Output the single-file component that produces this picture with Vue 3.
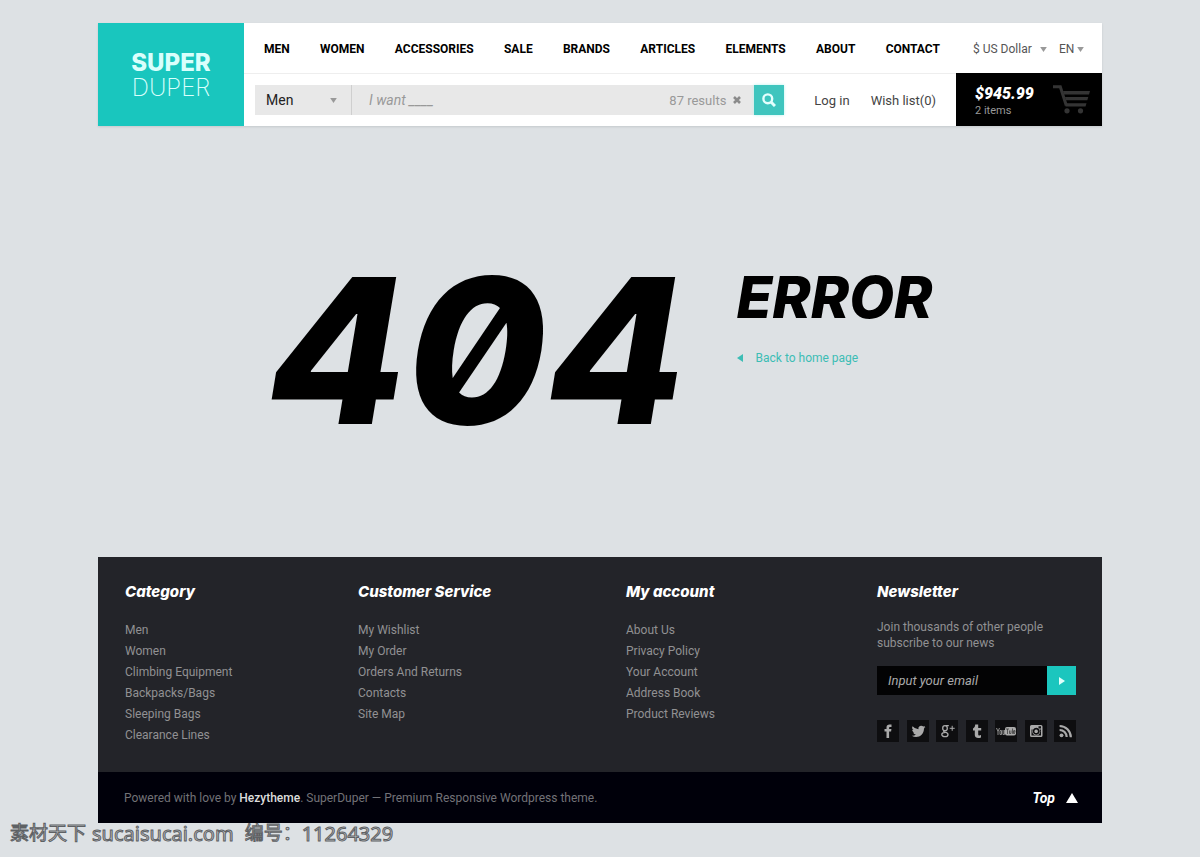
<script setup>
import { ref } from 'vue'

const nav = ['MEN', 'WOMEN', 'ACCESSORIES', 'SALE', 'BRANDS', 'ARTICLES', 'ELEMENTS', 'ABOUT', 'CONTACT']
const columns = [
  { title: 'Category', links: ['Men', 'Women', 'Climbing Equipment', 'Backpacks/Bags', 'Sleeping Bags', 'Clearance Lines'] },
  { title: 'Customer Service', links: ['My Wishlist', 'My Order', 'Orders And Returns', 'Contacts', 'Site Map'] },
  { title: 'My account', links: ['About Us', 'Privacy Policy', 'Your Account', 'Address Book', 'Product Reviews'] },
]
const query = ref('')
const email = ref('')
</script>

<template>
  <div class="page">
    <header class="header">
      <a href="#" class="logo"><strong>SUPER</strong><span>DUPER</span></a>
      <div class="header-main">
        <div class="row-top">
          <nav class="nav">
            <a v-for="item in nav" :key="item" href="#">{{ item }}</a>
          </nav>
          <div class="locale">
            <div class="pick pick-currency">
              <select aria-label="Currency"><option>$ US Dollar</option></select>
              <svg class="caret" viewBox="0 0 8 6"><path d="M0 0h8L4 6z" /></svg>
            </div>
            <div class="pick pick-lang">
              <select aria-label="Language"><option>EN</option></select>
              <svg class="caret" viewBox="0 0 8 6"><path d="M0 0h8L4 6z" /></svg>
            </div>
          </div>
        </div>
        <div class="row-bottom">
          <form class="search" @submit.prevent>
            <div class="pick pick-dept">
              <select aria-label="Department"><option>Men</option></select>
              <svg class="caret" viewBox="0 0 8 6"><path d="M0 0h8L4 6z" /></svg>
            </div>
            <input v-model="query" type="text" class="query" aria-label="Search" placeholder="I want ____" />
            <span class="results">87 results</span>
            <button type="button" class="clear" aria-label="Clear search" @click="query = ''">
              <svg viewBox="0 0 8 8"><path d="M1 1l6 6M7 1L1 7" stroke="#8b8b8b" stroke-width="2.6" /></svg>
            </button>
            <button type="submit" class="go" aria-label="Search">
              <svg viewBox="0 0 14 14" fill="none" stroke="#e4fffd"><circle cx="5.8" cy="5.8" r="4.4" stroke-width="2.4" /><path d="M9 9l4 4" stroke-width="3" /></svg>
            </button>
          </form>
          <div class="account"><a href="#">Log in</a><a href="#">Wish list(0)</a></div>
          <a href="#" class="cart">
            <span class="cart-text"><strong>$945.99</strong><span>2 items</span></span>
            <svg viewBox="0 0 37 29" fill="#343434">
              <path d="M0 1.800h7.300L13.300 20.500" fill="none" stroke="#343434" stroke-width="3" />
              <path d="M10 6h27l-1 3.500H11zM12 12h23.300l-1 3.200H13zM13 18.300h20.500l-1 3.200H12.500z" />
              <circle cx="14" cy="25.800" r="2.600" /><circle cx="27.500" cy="25.800" r="2.600" />
            </svg>
          </a>
        </div>
      </div>
    </header>

    <main class="main">
      <h1 class="code">404</h1>
      <div class="message">
        <h2>ERROR</h2>
        <a href="#" class="back"><svg viewBox="0 0 6 8"><path d="M6 0v8L0 4z" fill="#3cbdb5" /></svg>Back to home page</a>
      </div>
    </main>

    <footer class="footer">
      <div class="footer-cols">
        <section v-for="col in columns" :key="col.title">
          <h3>{{ col.title }}</h3>
          <ul><li v-for="link in col.links" :key="link"><a href="#">{{ link }}</a></li></ul>
        </section>
        <section>
          <h3>Newsletter</h3>
          <p class="pitch">Join thousands of other people subscribe to our news</p>
          <form class="subscribe" @submit.prevent>
            <input v-model="email" type="email" aria-label="Email" placeholder="Input your email" />
            <button type="submit" aria-label="Subscribe"><svg viewBox="0 0 6 8"><path d="M0 0l6 4-6 4z" fill="#dffffb" /></svg></button>
          </form>
          <div class="social">
            <a href="#" aria-label="Facebook"><svg viewBox="0 0 22 22"><path d="M9.500 18v-6.500H7.500V9h2V7.500C9.500 5.300 10.700 4.500 12.500 4.500h2V7h-1.300c-.8 0-1.100.3-1.100 1v1h2.300l-.3 2.500h-2V18z" /></svg></a>
            <a href="#" aria-label="Twitter"><svg viewBox="0 0 22 22"><path d="M18.500 7c-.5.300-1 .4-1.600.5.600-.4 1-.9 1.200-1.500-.6.300-1.200.5-1.800.6a2.900 2.900 0 0 0-4.900 2.600A8 8 0 0 1 5.600 6.200a2.900 2.900 0 0 0 .9 3.800c-.5 0-.9-.1-1.300-.3 0 1.400 1 2.500 2.300 2.800-.4.100-.9.100-1.300 0 .4 1.200 1.400 2 2.700 2-1.200 1-2.700 1.400-4.200 1.200 5.500 3.400 12.300-.2 12.300-7.200.6-.4 1.100-.9 1.500-1.500z" /></svg></a>
            <a href="#" aria-label="Google Plus"><svg class="line" viewBox="0 0 22 22"><ellipse cx="9" cy="8.200" rx="2.300" ry="2.500" /><path d="M9.500 5.600h3.300M8 10.700c-1.800 1.500 4 1 4 3.700 0 3-6.200 3-6.200.2 0-1.600 2-2.200 3.600-2.200" /><path d="M16.200 5.800v5M13.700 8.300h5" stroke-width="1" /></svg></a>
            <a href="#" aria-label="Tumblr"><svg viewBox="0 0 22 22"><path d="M9.200 4.500h3V8h3v2.500h-3v3.700c0 1.500 1.400 1.400 2.800.7v2.500c-2.800 1.200-6.200.8-6.200-2.400v-4.500H7V8.400c1.500-.5 2-1.900 2.200-3.900z" /></svg></a>
            <a href="#" aria-label="YouTube"><svg viewBox="0 0 22 22"><rect x="10" y="7" width="11" height="8.500" rx="2" /><path d="M1.500 8l1.500 3.500V15M4.500 8L3 11.500M5 10.500h1.500v4H5zM8 10v4.500h1.500V10" fill="none" stroke="#8c8c8c" /><path d="M11 9h3M12.500 9v5M14.500 10.500v3H16v-3M17.500 8.500v5h1v-3M20 12.500v-2h-.8v3h.8" fill="none" stroke="#333" stroke-width=".7" /></svg></a>
            <a href="#" aria-label="Instagram"><svg viewBox="0 0 22 22"><path fill-rule="evenodd" d="M6.500 5h9.500Q17.500 5 17.500 6.500v9q0 1.500-1.500 1.500h-9.500Q5 17 5 15.500v-9Q5 5 6.500 5zM6.500 9.500v6h9.500v-6h-1.200a4 4 0 1 1-7.100 0zM13.500 6.300v2.200h2.500V6.300z" /><path fill-rule="evenodd" d="M11.200 7.700a3.500 3.500 0 1 0 .1 0zM11.200 9.500a1.800 1.800 0 1 1-.1 0z" fill="#0e0e10" /></svg></a>
            <a href="#" aria-label="RSS"><svg viewBox="0 0 22 22"><circle cx="7.500" cy="15.300" r="1.900" /><path d="M5.600 10a7.100 7.100 0 0 1 7.100 7.100M5.600 6a11.200 11.200 0 0 1 11.200 11.200" fill="none" stroke="#aaa" stroke-width="2.200" /></svg></a>
          </div>
        </section>
      </div>
      <div class="footer-bottom">
        <p>Powered with love by <a href="#">Hezytheme</a>. SuperDuper — Premium Responsive Wordpress theme.</p>
        <a href="#" class="top">Top<svg viewBox="0 0 12 10"><path d="M6 0l6 10H0z" fill="#fff" /></svg></a>
      </div>
    </footer>
    <div class="stamp"><span>素材天下</span><span class="latin">sucaisucai.com</span><span>编号：</span><span class="latin">11264329</span></div>
  </div>
</template>

<style>
body { margin: 0; background: #dde1e4; }
</style>

<style scoped>
* { box-sizing: border-box; }
.page { font-family: Roboto, "Liberation Sans", sans-serif; font-size: 13px; padding-top: 23px; }
.header, .main, .footer { max-width: 1004px; margin: 0 auto; }
a { color: inherit; text-decoration: none; }
h1, h2, h3, p, ul { margin: 0; padding: 0; }
ul { list-style: none; }
button, input, select { font: inherit; border: 0; border-radius: 0; padding: 0; margin: 0; outline: 0; }
button { display: flex; align-items: center; justify-content: center; cursor: pointer; }
svg { display: block; flex: none; }

.header { display: flex; background: #fff; box-shadow: 0 1px 2px #c5c9cc; }
.logo { width: 146px; background: #19c6be; display: flex; flex-direction: column; justify-content: center; align-items: center; font: 24px/25px Inter, sans-serif; color: #d9fffc; }
.logo strong { font-weight: 800; }
.logo span { font-weight: 200; }
.header-main { flex: 1; min-width: 0; }
.row-top { height: 50px; display: flex; align-items: center; justify-content: space-between; padding: 2px 18px 0 20px; }
.nav { flex: 1; display: flex; justify-content: space-between; font-weight: 700; font-size: 12px; color: #000; }
.locale { display: flex; gap: 12px; margin-left: 33px; color: #555; font-size: 12px; }
.pick { display: flex; align-items: center; position: relative; }
.pick select { appearance: none; background: none; color: inherit; width: 100%; height: 100%; }
.pick-currency { width: 74px; }
.pick-lang { width: 25px; }
.caret { position: absolute; right: 0; width: 7px; height: 5px; fill: #999; pointer-events: none; }
.row-bottom { height: 53px; display: flex; align-items: center; border-top: 1px solid #eee; padding-left: 11px; }
.search { flex: 1; height: 30px; display: flex; align-items: center; background: #e8e8e8; }
.pick-dept { width: 97px; height: 30px; border-right: 1px solid #cfcfcf; padding-left: 11px; font-size: 14px; color: #222; }
.pick-dept .caret { right: 14px; }
.query { flex: 1; min-width: 0; height: 30px; background: none; padding-left: 17px; font-size: 14px; font-style: italic; }
.query::placeholder { color: #999; opacity: 1; }
.results { color: #999; }
.clear { width: 28px; height: 30px; padding-right: 6px; background: none; }
.clear svg { width: 8px; height: 8px; }
.go { width: 30px; height: 30px; background: #3fc5be; box-shadow: 0 0 3px #b6f3ee; }
.go svg { width: 14px; height: 14px; }
.account { display: flex; gap: 21px; padding: 0 20px 0 30px; color: #444; }
.cart { width: 146px; height: 53px; margin-top: -1px; background: #000; display: flex; justify-content: space-between; padding: 12px 12px 0 19px; }
.cart-text { display: flex; flex-direction: column; color: #999; font-size: 11px; line-height: 17px; }
.cart-text strong { color: #fff; font-size: 16px; font-weight: 900; font-style: italic; }
.cart svg { width: 37px; height: 29px; }

.main { height: 431px; display: flex; justify-content: center; align-items: flex-start; gap: 51px; padding-top: 147px; color: #000; }
.code { font: italic 800 202px/156px Inter, sans-serif; font-feature-settings: "zero"; }
.message h2 { font: italic 800 58px/48px Inter, sans-serif; }
.back { display: flex; align-items: center; gap: 13px; margin-top: 27px; line-height: 20px; font-size: 12px; color: #3cbdb5; }
.back svg { width: 6px; height: 8px; }

.footer { background: #232429; color: #919193; font-size: 12px; }
.footer-cols { min-height: 215px; display: grid; grid-template-columns: minmax(0, 233fr) minmax(0, 268fr) minmax(0, 251fr) minmax(0, 199fr); padding: 24px 26px 26px 27px; }
h3 { font: italic 800 15px/22px Inter, sans-serif; color: #fff; }
ul { margin-top: 17px; }
li { line-height: 21px; }
.pitch { margin-top: 16px; line-height: 16px; }
.subscribe { display: flex; margin-top: 15px; }
.subscribe input { flex: 1; min-width: 0; height: 29px; background: #030304; color: #ccc; padding-left: 11px; font-size: 13px; font-style: italic; }
.subscribe input::placeholder { color: #aaa; opacity: 1; }
.subscribe button { width: 29px; height: 29px; background: #1bc6be; }
.subscribe button svg { width: 6px; height: 8px; }
.social { display: flex; justify-content: space-between; margin-top: 25px; }
.social a { width: 22px; height: 22px; background: #0e0e10; }
.social svg { width: 22px; height: 22px; fill: #aaa; }
.social .line { fill: none; stroke: #aaa; stroke-width: 1.3; }
.footer-bottom { min-height: 51px; display: flex; align-items: center; justify-content: space-between; background: #00000a; padding: 0 24px 0 26px; color: #727277; }
.footer-bottom p a { color: #ddd; font-weight: 500; }
.top { display: flex; align-items: center; gap: 11px; color: #fff; font: italic 700 14px/20px Roboto, sans-serif; }
.top svg { width: 12px; height: 10px; }
.stamp { display: flex; align-items: center; padding-left: 10px; height: 21px; font: 19px/21px "Noto Sans", "Noto Sans CJK SC", sans-serif; color: #c4c7ca; -webkit-text-stroke: 1px #5e6164; }
.stamp .latin { margin: 0 11px 0 6px; font-size: 20px; }
.stamp .latin:last-child { margin-left: 0; }
</style>
